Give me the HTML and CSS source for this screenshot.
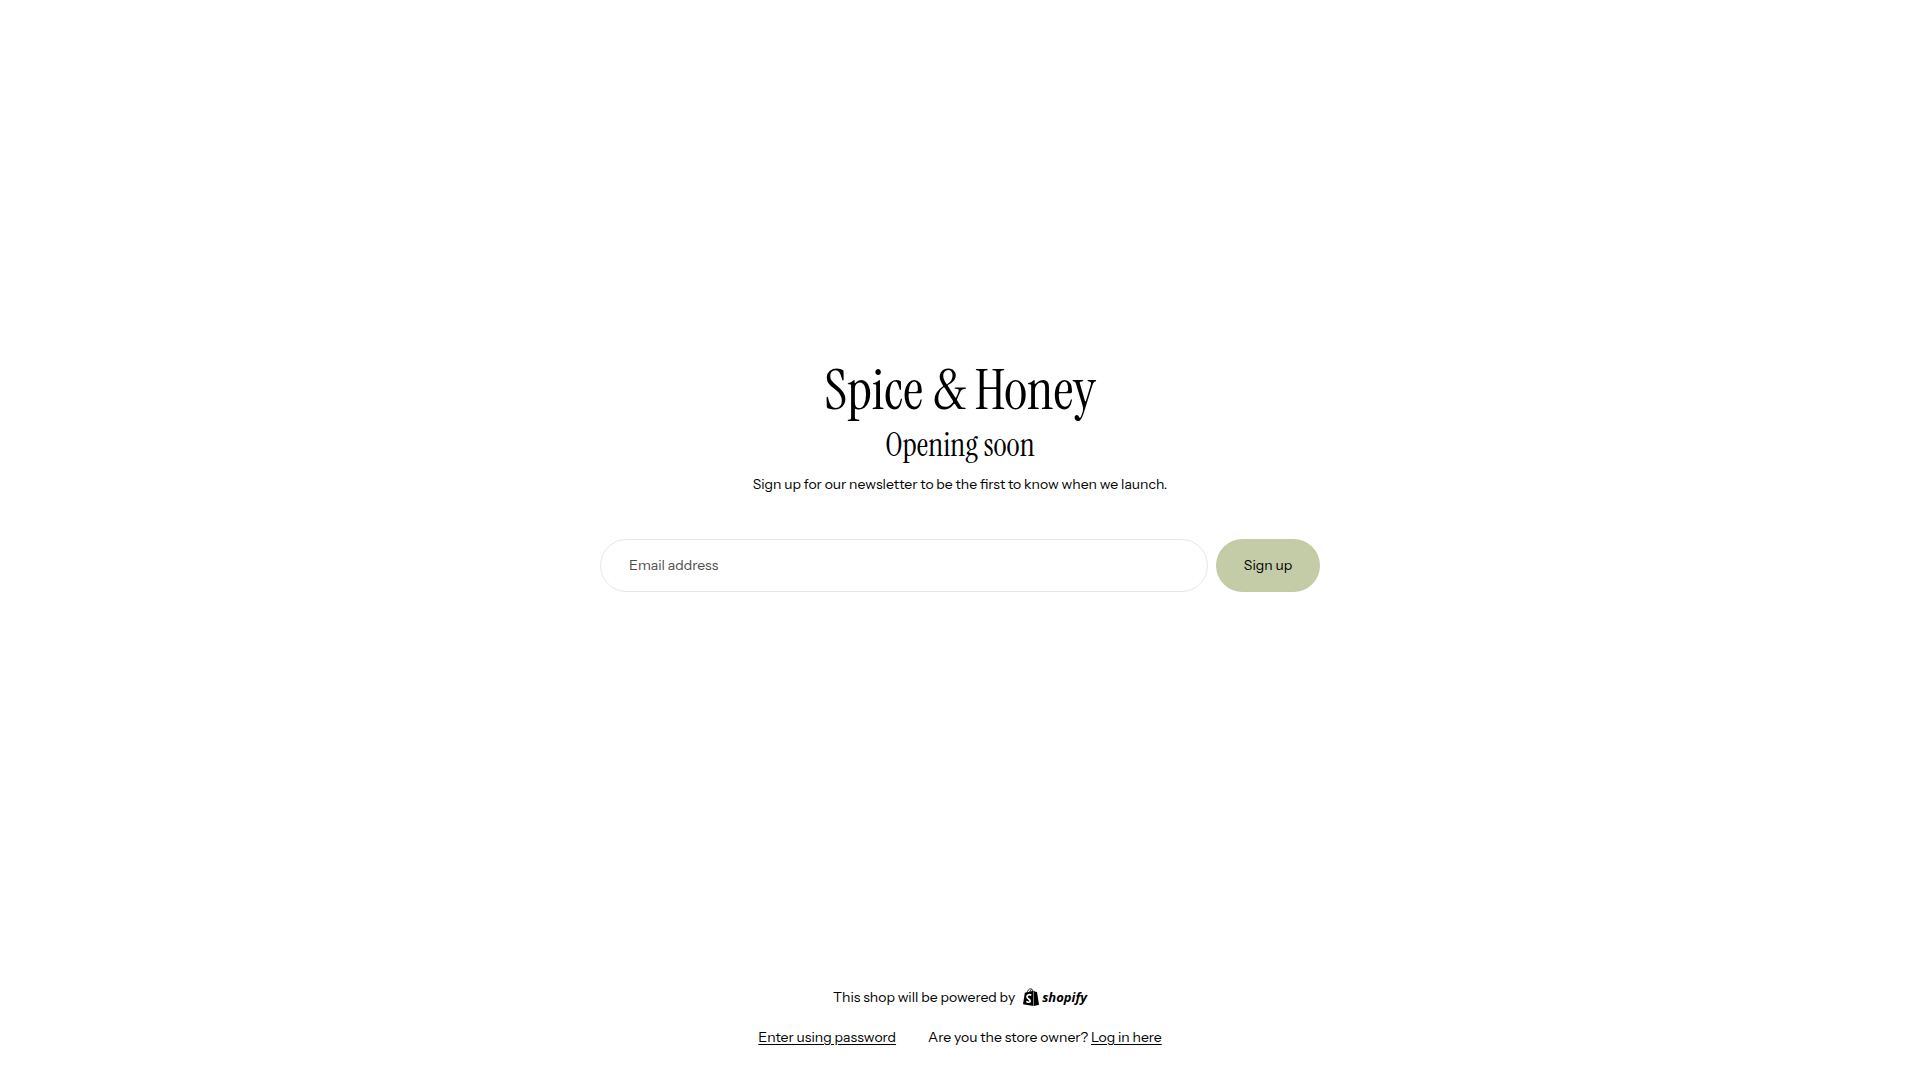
FILE: index.html
```html
<!DOCTYPE html>
<html lang="en">
<head>
    <meta charset="utf-8">
    <meta name="viewport" content="width=device-width, initial-scale=1">
    <title>Spice &amp; Honey - Opening soon</title>
    <link rel="stylesheet" href="styles.css">
</head>
<body>
    <main class="main-container">
        <h1 class="shop-name">Spice &amp; Honey</h1>
        <h2 class="status">Opening soon</h2>
        <p class="message">Sign up for our newsletter to be the first to know when we launch.</p>

        <form class="signup-form">
            <div class="field">
                <input type="email" id="email" placeholder=" " required>
                <label for="email">Email address</label>
            </div>
            <button type="submit" class="submit-btn">Sign up</button>
        </form>
    </main>

    <footer class="footer">
        <div class="powered-by">
            <span>This shop will be powered by</span>
            <a href="#" class="shopify-logo">
                <svg class="bag-icon" viewBox="0 0 16 18" aria-hidden="true">
                    <path d="M4 5C4.500 2.500 6 .8 7.500.8C9 .8 9.800 2 10 4M6.800 4.500C7 2.500 8 1.200 9.300 1.700" fill="none" stroke="#000" stroke-width="0.8"/>
                    <path d="M1.800 4.800L10.500 2.800V18L0 16.200Z"/>
                    <path d="M11 2.800L12.200 3.800L14 4L16 16.800L11 18Z"/>
                    <path d="M8.300 7.200C6.500 6.200 4 6.800 4 8.800C4 11 7.200 11 7.200 12.900C7.200 14.600 4.800 14.600 3.300 13.400" fill="none" stroke="#fff" stroke-width="1.700"/>
                </svg>
                <span class="shopify-name">shopify</span>
            </a>
        </div>
        <div class="footer-links">
            <a href="#password">Enter using password</a>
            <p>Are you the store owner? <a href="#login">Log in here</a></p>
        </div>
    </footer>
</body>
</html>
```

FILE: styles.css
```css
* {
    box-sizing: border-box;
}

body {
    font-family: "Instrument Sans", Inter, sans-serif;
    font-size: 14px;
    line-height: 22px;
    color: #000;
    background-color: #fff;
    display: flex;
    flex-direction: column;
    min-height: 100vh;
    margin: 0;
}

h1,
h2,
p {
    margin: 0;
    font-weight: normal;
}

a {
    color: inherit;
    text-underline-offset: 2px;
}

.main-container {
    flex: 1;
    display: flex;
    flex-direction: column;
    align-items: center;
    justify-content: center;
    padding: 0 20px 40px;
    text-align: center;
}

.shop-name {
    font-family: "Instrument Serif", "Liberation Serif", serif;
    font-size: 56px;
    line-height: 70px;
}

.status {
    font-family: "Instrument Serif", "Liberation Serif", serif;
    font-size: 32px;
    line-height: 40px;
    margin-bottom: 8px;
}

.signup-form {
    display: flex;
    gap: 8px;
    width: 100%;
    max-width: 720px;
    margin-top: 44px;
}

.field {
    position: relative;
    flex: 1;
    min-width: 0;
}

.field input {
    display: block;
    width: 100%;
    height: 53px;
    padding: 0 28px;
    border: 1px solid #e6e6e6;
    border-radius: 27px;
    background: #fff;
    font: inherit;
}

/* label sits inside the field until something is typed */
.field label {
    position: absolute;
    inset: 0 auto 0 29px;
    display: flex;
    align-items: center;
    color: #4d4d4d;
    pointer-events: none;
}

.field input:not(:placeholder-shown) + label {
    visibility: hidden;
}

.submit-btn {
    width: 104px;
    height: 53px;
    padding: 0;
    border: none;
    border-radius: 27px;
    background-color: #c4cba7;
    color: #000;
    font: inherit;
    cursor: pointer;
}

.footer {
    display: flex;
    flex-direction: column;
    align-items: center;
    gap: 18px;
    padding: 0 20px 32px;
}

.powered-by {
    display: flex;
    align-items: center;
    gap: 8px;
}

.shopify-logo {
    display: flex;
    align-items: center;
    gap: 3px;
    text-decoration: none;
}

.bag-icon {
    width: 16px;
    height: 18px;
}

.shopify-name {
    font-family: "Open Sans", sans-serif;
    font-size: 13px;
    font-style: italic;
    font-weight: 700;
}

.footer-links {
    display: flex;
    flex-wrap: wrap;
    justify-content: center;
    gap: 0 32px;
}
```
